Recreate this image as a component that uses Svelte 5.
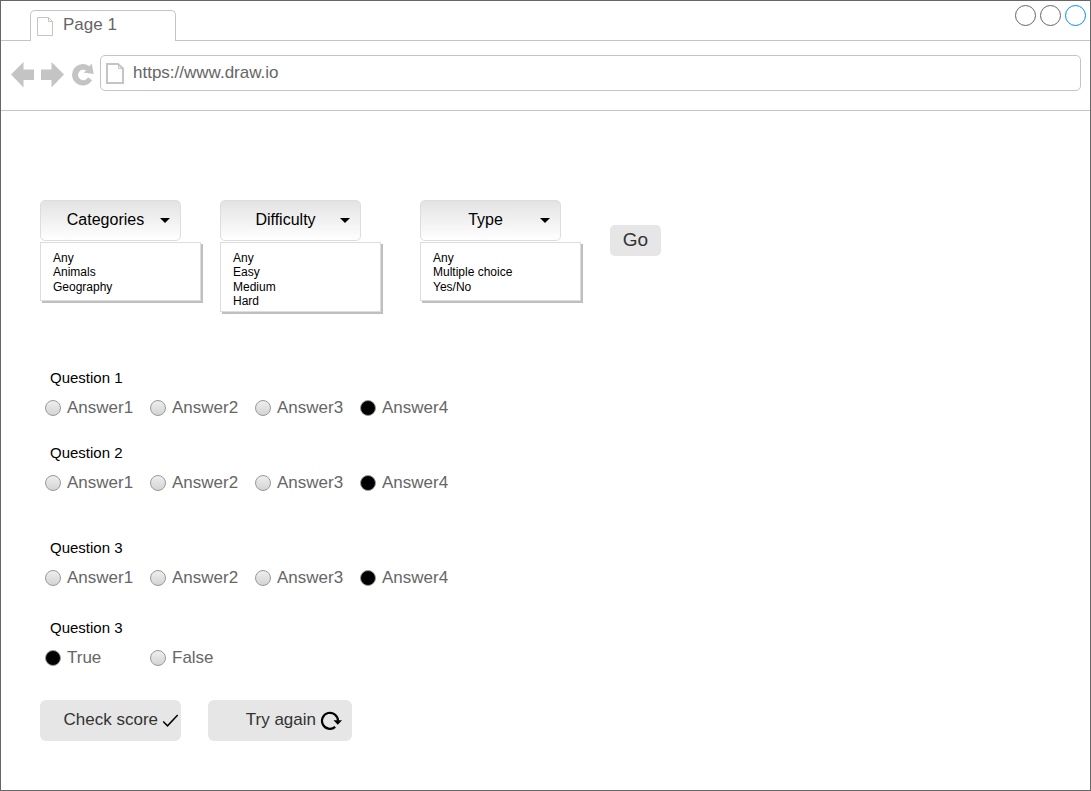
<script>
  let filters = $state([
    { name: 'Categories', open: true, picked: '', options: ['Any', 'Animals', 'Geography'] },
    { name: 'Difficulty', open: true, picked: '', options: ['Any', 'Easy', 'Medium', 'Hard'] },
    { name: 'Type', open: true, picked: '', options: ['Any', 'Multiple choice', 'Yes/No'] }
  ]);

  const four = ['Answer1', 'Answer2', 'Answer3', 'Answer4'];
  const initial = () => ['Answer4', 'Answer4', 'Answer4', 'True'];
  const questions = [
    { title: 'Question 1', answers: four, space: '' },
    { title: 'Question 2', answers: four, space: 'wide' },
    { title: 'Question 3', answers: four, space: 'medium' },
    { title: 'Question 3', answers: ['True', 'False'], space: 'medium' }
  ];
  let chosen = $state(initial());
  let address = $state('https://www.draw.io');
</script>

<div class="window">
  <header class="tabs">
    <div class="tab">
      <svg class="tab-icon" viewBox="0 0 16 20" width="16" height="20" aria-hidden="true">
        <path d="M.5 .5H11.500L15.500 4.500V18.500H.5Z M11.500 .5V4.500H15.500" />
      </svg>
      <span>Page 1</span>
    </div>
    <div class="controls">
      <button aria-label="Minimize"></button>
      <button aria-label="Maximize"></button>
      <button class="close" aria-label="Close"></button>
    </div>
  </header>

  <nav class="toolbar">
    <button class="nav" aria-label="Back">
      <svg viewBox="0 0 24 27" width="24" height="27"><path d="M0 12.500 12.500 0V7.500H23V18H12.500V25.500Z" /></svg>
    </button>
    <button class="nav" aria-label="Forward">
      <svg viewBox="0 0 24 27" width="24" height="27"><path d="M23 12.500 10.500 0V7.500H0V18H10.500V25.500Z" /></svg>
    </button>
    <button class="nav" aria-label="Reload">
      <svg viewBox="0 0 23 27" width="23" height="27">
        <path d="M20.800 1.800 22.700 12 12.300 10.600 15.300 8.700A5.200 5.200 0 1 0 17 15.200L21 18.200A10.700 10.700 0 1 1 18.300 4.300Z" />
      </svg>
    </button>
    <label class="address">
      <svg viewBox="0 0 18 22" width="18" height="22" aria-hidden="true">
        <path d="M1 2H12L17 6.500V21H1Z" />
        <path class="fold" d="M12.500 2V6.500H17" />
      </svg>
      <input type="text" aria-label="Address" bind:value={address} />
    </label>
  </nav>

  <main>
    <div class="filters">
      {#each filters as filter}
        <div class="filter">
          <button class="drop" aria-expanded={filter.open} onclick={() => (filter.open = !filter.open)}>
            <span>{filter.name}</span>
            <svg viewBox="0 0 10 5" width="10" height="5" aria-hidden="true"><path d="M0 0H10L5 5Z" /></svg>
          </button>
          {#if filter.open}
            <ul class="menu">
              {#each filter.options as option}
                <li>
                  <button aria-pressed={filter.picked === option} onclick={() => (filter.picked = option)}>{option}</button>
                </li>
              {/each}
            </ul>
          {/if}
        </div>
      {/each}
      <button class="go">Go</button>
    </div>

    <form onsubmit={(e) => e.preventDefault()}>
      {#each questions as question, q}
        <fieldset class={question.space}>
          <legend>{question.title}</legend>
          <div class="answers">
            {#each question.answers as answer}
              <label>
                <input type="radio" name="question-{q}" value={answer} bind:group={chosen[q]} />
                <span>{answer}</span>
              </label>
            {/each}
          </div>
        </fieldset>
      {/each}

      <div class="actions">
        <button class="action check" type="submit">
          <span>Check score</span>
          <svg viewBox="0 0 16 14" width="16" height="14" aria-hidden="true"><path d="M1.200 7.500 5.500 11.800 15.700 1" /></svg>
        </button>
        <button class="action again" type="button" onclick={() => (chosen = initial())}>
          <span>Try again</span>
          <svg viewBox="0 0 22 20" width="22" height="20" aria-hidden="true">
            <path d="M15.200 15.900A8 8 0 1 1 18 9.800" />
            <path class="head" d="M13.500 9.200H22L17.800 13.700Z" />
          </svg>
        </button>
      </div>
    </form>
  </main>
</div>

<style>
  :global(body) {
    background: #fff;
  }
  .window {
    box-sizing: border-box;
    min-height: 100vh;
    border: 1px solid #666;
    font-family: 'Liberation Sans', Arial, sans-serif;
    color: #000;
  }
  button,
  input {
    font: inherit;
    color: inherit;
  }
  button {
    margin: 0;
    padding: 0;
    border: 0;
    background: none;
    cursor: pointer;
  }
  svg {
    display: block;
    flex: none;
  }

  .tabs {
    display: flex;
    justify-content: space-between;
    height: 39px;
    border-bottom: 1px solid #c4c4c4;
    padding-left: 29px;
  }
  .tab {
    box-sizing: border-box;
    display: flex;
    gap: 10px;
    width: 146px;
    height: 31px;
    margin-top: 9px;
    padding: 5px 6px 0;
    border: 1px solid #c4c4c4;
    border-bottom: 0;
    border-radius: 5px 5px 0 0;
    background: #fff;
    font-size: 17px;
    line-height: 18px;
    color: #666;
  }
  .tab-icon {
    margin-top: 1px;
    fill: none;
    stroke: #c4c4c4;
  }
  .controls {
    display: flex;
    gap: 4px;
    padding: 4px 4px 0 0;
  }
  .controls button {
    box-sizing: border-box;
    width: 21px;
    height: 21px;
    border: 1px solid #666;
    border-radius: 50%;
  }
  .controls .close {
    border-color: #008cff;
  }

  .toolbar {
    box-sizing: border-box;
    display: flex;
    align-items: center;
    gap: 6px;
    height: 70px;
    padding: 0 9px 0 10px;
    border-bottom: 1px solid #c4c4c4;
  }
  .nav svg {
    fill: #c4c4c4;
  }
  .address {
    box-sizing: border-box;
    display: flex;
    align-items: center;
    gap: 9px;
    flex: 1;
    height: 36px;
    padding: 0 6px 0 5px;
    margin-bottom: 5px;
    border: 1px solid #c4c4c4;
    border-radius: 5px;
  }
  .address svg {
    fill: none;
    stroke: #c4c4c4;
    stroke-width: 2;
  }
  .address .fold {
    stroke-width: 1;
  }
  .address input {
    flex: 1;
    min-width: 0;
    padding: 0;
    border: 0;
    outline: 0;
    background: none;
    font-size: 17px;
    line-height: 20px;
    color: #666;
  }

  main {
    padding: 89px 39px 48px;
  }
  .filters {
    display: grid;
    grid-template-columns: 180px 200px 190px auto;
    justify-content: start;
    align-items: start;
    min-height: 114px;
  }
  .drop {
    box-sizing: border-box;
    display: flex;
    align-items: center;
    width: 141px;
    height: 41px;
    padding: 0 10px;
    border: 1px solid #ddd;
    border-radius: 5px;
    background: linear-gradient(#e3e3e3, #fff);
    font-size: 16px;
  }
  .drop span {
    flex: 1;
    padding-bottom: 2px;
  }
  .menu {
    box-sizing: border-box;
    width: 161px;
    min-height: 59px;
    margin: 1px 0 0;
    padding: 8px 12px 2px;
    list-style: none;
    border: 1px solid #ddd;
    background: #fff;
    box-shadow: 2px 2px 0 #bfbfbf;
    font-size: 12px;
    line-height: 1.2;
  }
  .menu button {
    display: block;
  }
  .go {
    width: 51px;
    height: 31px;
    margin-top: 25px;
    padding-bottom: 2px;
    border-radius: 5px;
    background: #e6e6e6;
    font-size: 19px;
    color: #333;
  }

  form {
    padding-top: 55px;
  }
  fieldset {
    margin: 0 0 26px;
    padding: 0;
    border: 0;
    min-width: 0;
  }
  fieldset.medium {
    margin-bottom: 31px;
  }
  fieldset.wide {
    margin-bottom: 46px;
  }
  legend {
    padding: 0 10px;
    font-size: 15px;
    line-height: 18px;
  }
  .answers {
    display: flex;
    padding: 11px 5px 0;
  }
  .answers label {
    display: flex;
    align-items: center;
    gap: 6px;
    width: 105px;
    font-size: 17px;
    line-height: 20px;
    color: #666;
  }
  .answers input {
    appearance: none;
    flex: none;
    width: 16px;
    height: 16px;
    margin: 0;
    border: 1px solid #999;
    border-radius: 50%;
    background: linear-gradient(#eee, #d4d4d4);
  }
  .answers input:checked {
    background: #000;
  }

  .actions {
    display: flex;
    gap: 27px;
    padding-top: 1px;
  }
  .action {
    display: flex;
    align-items: center;
    justify-content: flex-end;
    gap: 4px;
    height: 41px;
    border-radius: 6px;
    background: #e6e6e6;
    font-size: 17px;
    color: #333;
  }
  .action span {
    padding-bottom: 2px;
  }
  .action path {
    fill: none;
    stroke: #000;
  }
  .check {
    width: 141px;
    padding-right: 3px;
  }
  .check path {
    stroke-width: 1.500;
  }
  .again {
    width: 144px;
    padding-right: 10px;
  }
  .again path {
    stroke-width: 2.200;
  }
  .again .head {
    fill: #000;
    stroke: none;
  }
</style>
